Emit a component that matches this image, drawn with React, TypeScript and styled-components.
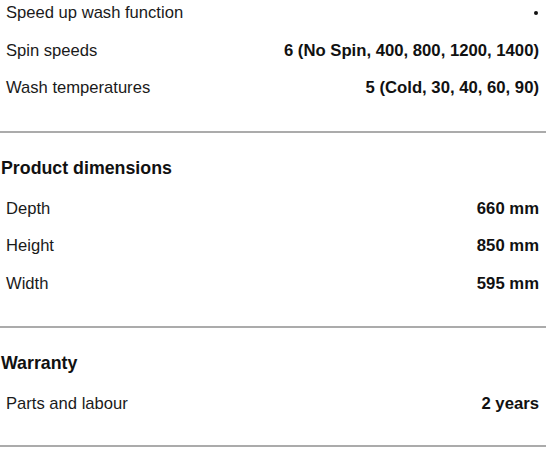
import React from 'react';
import styled, { createGlobalStyle } from 'styled-components';

const GlobalStyle = createGlobalStyle`
  body {
    margin: 0;
    background: #fff;
    font-family: "Liberation Sans", Arial, sans-serif;
    color: #111;
  }
`;

const Page = styled.div`
  width: 546px;
  overflow: hidden;
  height: 449px;
`;

const Section = styled.section<{ first?: boolean; last?: boolean }>`
  padding: ${(p) => (p.first ? '0' : '25px')} 0 ${(p) => (p.last ? '22px' : '24px')};
  margin-top: ${(p) => (p.first ? '-5.75px' : '0')};
  border-bottom: 2px solid #ababab;
`;

const Heading = styled.h3`
  margin: 0 0 12px 1px;
  font-size: 17.8px;
  line-height: 20px;
  font-weight: bold;
  color: #111;
`;

const Row = styled.div`
  display: flex;
  align-items: center;
  justify-content: space-between;
  height: 37.5px;
  padding: 0 7px 0 6px;
  font-size: 16.6px;
`;

const Label = styled.span`
  color: #1a1a1a;
`;

const Value = styled.span`
  font-weight: bold;
  font-size: 16.7px;
  color: #111;
`;

const Dot = styled.span`
  width: 4px;
  height: 4px;
  margin-right: 1px;
  border-radius: 50%;
  background: #111;
`;

type Spec = { label: string; value?: string };

const groups: { title?: string; specs: Spec[] }[] = [
  {
    specs: [
      { label: 'Speed up wash function' },
      { label: 'Spin speeds', value: '6 (No Spin, 400, 800, 1200, 1400)' },
      { label: 'Wash temperatures', value: '5 (Cold, 30, 40, 60, 90)' },
    ],
  },
  {
    title: 'Product dimensions',
    specs: [
      { label: 'Depth', value: '660 mm' },
      { label: 'Height', value: '850 mm' },
      { label: 'Width', value: '595 mm' },
    ],
  },
  {
    title: 'Warranty',
    specs: [{ label: 'Parts and labour', value: '2 years' }],
  },
];

export default function App() {
  return (
    <>
      <GlobalStyle />
      <Page>
        {groups.map((g, i) => (
          <Section key={i} first={i === 0} last={i === groups.length - 1}>
            {g.title ? <Heading>{g.title}</Heading> : null}
            {g.specs.map((s) => (
              <Row key={s.label}>
                <Label>{s.label}</Label>
                {s.value ? <Value>{s.value}</Value> : <Dot />}
              </Row>
            ))}
          </Section>
        ))}
      </Page>
    </>
  );
}
